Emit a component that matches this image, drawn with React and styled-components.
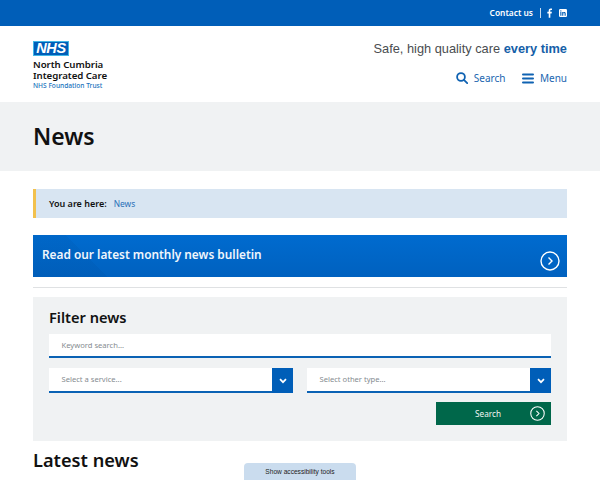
import React from "react";
import styled, { createGlobalStyle } from "styled-components";

const Global = createGlobalStyle`
  html, body { margin: 0; padding: 0; background: #fff; height: 480px; overflow: hidden; }
  body { font-family: "Noto Sans", "Open Sans", sans-serif; color: #111; }
  * { box-sizing: border-box; }
`;
const Page = styled.div`width: 600px; height: 480px; overflow: hidden; position: relative;`;
const TopBar = styled.div`
  height: 26px; background: #005eb8; display: flex; align-items: center; justify-content: flex-end;
  padding-right: 33px; color: #fff;
`;
const TopLink = styled.span`font-size: 8.4px; font-weight: 600; line-height: 1;`;
const Divider = styled.span`width: 1px; height: 10px; background: #c8dcf0; margin: 0 6px 0 7px;`;
const Social = styled.svg`width: 6px; height: 10px; display: block; margin-right: 6px;`;
const Linked = styled.svg`width: 8px; height: 8px; display: block;`;
const Header = styled.header`
  height: 76px; display: flex; justify-content: space-between; padding: 15px 33px 0;
`;
const Logo = styled.div`display: flex; flex-direction: column; align-items: flex-start;`;
const NhsBox = styled.div`
  width: 36px; height: 15px; background: #005eb8; border: 1px solid #41b6e6; color: #fff;
  font: italic 700 14.5px/13px "Liberation Sans", sans-serif; text-align: center; letter-spacing: -0.3px;
  margin-bottom: 3px;
`;
const LogoName = styled.div`font-size: 9.7px; line-height: 10.5px; font-weight: 600; color: #111; white-space: nowrap; margin-top: 1px; letter-spacing: -0.05px;`;
const LogoTrust = styled.div`font-size: 6.6px; line-height: 9px; font-weight: 500; color: #1a73bd; white-space: nowrap;`;
const HeaderRight = styled.div`display: flex; flex-direction: column; align-items: flex-end;`;
const Strap = styled.div`
  font: 400 12.8px/16px "Liberation Sans", sans-serif; color: #4a4d50; white-space: nowrap;
`;
const StrapBold = styled.span`font-weight: 700; color: #1560a8;`;
const Nav = styled.nav`display: flex; align-items: center; gap: 17px; margin-top: 11px; height: 20px;`;
const NavItem = styled.div`display: flex; align-items: center; gap: 5.5px; font-size: 10px; color: #1a66b0;`;
const Band = styled.div`height: 69px; background: #f0f2f3; display: flex; align-items: center; padding: 0 33px;`;
const Title = styled.h1`margin: 0; font-size: 23px; font-weight: 600; line-height: 1; color: #111;`;
const Main = styled.main`padding: 18px 33px 0; display: flex; flex-direction: column;`;
const Crumb = styled.div`
  height: 29px; background: #d8e5f2; border-left: 3px solid #f2c14e; display: flex; align-items: center;
  padding-left: 13px; gap: 7px;
`;
const CrumbLabel = styled.span`font-size: 9px; font-weight: 600; color: #111;`;
const CrumbLink = styled.span`font-size: 8.4px; color: #2a6fb8;`;
const Banner = styled.div`
  height: 42px; margin-top: 17px; position: relative; display: flex; padding: 11px 9px 0;
  background:
    linear-gradient(45deg, rgba(0, 40, 90, 0.06) 0 13%, transparent 13%),
    linear-gradient(180deg, #006bcf 0%, #0061bf 100%);
  overflow: hidden;
  font-size: 11.85px; line-height: 16px; font-weight: 600; color: #f0f6fc;
`;
const BannerCircle = styled.svg`position: absolute; right: 7px; bottom: 6px; width: 20px; height: 20px;`;
const Rule = styled.hr`margin: 10px 0 9px; border: 0; height: 1px; background: #dfe1e3;`;
const Filter = styled.section`
  height: 144px; background: #f0f2f3; padding: 11px 16px 0; display: flex; flex-direction: column;
`;
const FilterTitle = styled.h2`margin: 0; font-size: 14.6px; line-height: 19px; font-weight: 600; color: #111;`;
const Input = styled.div`
  height: 24px; margin-top: 7px; background: #fff; border-bottom: 2px solid #0a62b4; padding-left: 12.5px;
  display: flex; align-items: center; font-size: 7.6px; color: #858b90;
`;
const SelectRow = styled.div`display: grid; grid-template-columns: 244px 244px; justify-content: space-between; margin-top: 10px;`;
const Select = styled.div`
  height: 25px; background: #fff; border-bottom: 2px solid #0a62b4; padding: 0 0 1px 12.5px; position: relative;
  display: flex; align-items: center; font-size: 7.6px; color: #858b90;
`;
const Caret = styled.div`
  position: absolute; right: 0; top: 0; bottom: -2px; width: 21px; background: #005eb8;
  display: flex; align-items: center; justify-content: center;
`;
const ButtonRow = styled.div`display: flex; justify-content: flex-end; margin-top: 9px;`;
const SearchButton = styled.div`
  width: 115px; height: 23px; background: #00674a; color: #f0f6f3; position: relative;
  display: flex; align-items: center; justify-content: center; font-size: 8.2px; padding-right: 11px;
`;
const ButtonCircle = styled.svg`position: absolute; right: 6px; top: 4px; width: 15px; height: 15px;`;
const Latest = styled.h2`margin: 8px 0 0; font-size: 18.2px; line-height: 22px; font-weight: 600; color: #111;`;
const A11yTab = styled.div`
  position: fixed; left: 244px; bottom: 0; width: 112px; height: 17px; padding-top: 1px; background: #cadcee;
  border-radius: 4px 4px 0 0; display: flex; align-items: center; justify-content: center;
  font: 400 6.6px/1 "Liberation Sans", sans-serif; color: #222;
`;

const Circle = ({ as: C }) => (
  <C viewBox="0 0 20 20" fill="none" stroke="#fff">
    <circle cx="10" cy="10" r="9" strokeWidth="1.4" />
    <path d="M8.5 6.5 12 10l-3.5 3.5" strokeWidth="1.4" />
  </C>
);
const Chevron = () => (
  <svg width="8" height="6" viewBox="0 0 8 6" fill="none" stroke="#fff" strokeWidth="1.7">
    <path d="M1 1.2 4 4.2l3-3" />
  </svg>
);

export default function App() {
  return (
    <Page>
      <Global />
      <TopBar>
        <TopLink>Contact us</TopLink>
        <Divider />
        <Social viewBox="0 0 7 11" fill="#fff">
          <path d="M2 11V6H.4V4H2V2.6C2 1 3 .2 4.3.2c.7 0 1.2 0 1.5.1v1.8h-1c-.8 0-1 .4-1 1V4h1.9l-.3 2H3.9v5z" />
        </Social>
        <Linked viewBox="0 0 8 8">
          <rect width="8" height="8" rx="1.2" fill="#fff" />
          <path d="M1.3 3.1h1.1v3.6H1.3zM1.85 1.3a.6.6 0 1 1 0 1.3.6.6 0 0 1 0-1.3zM3.2 3.1h1v.5c.2-.3.6-.6 1.1-.6 1 0 1.4.6 1.4 1.6v2.1H5.6V4.8c0-.5-.1-.9-.6-.9s-.7.4-.7.9v1.9H3.2z" fill="#005eb8" />
        </Linked>
      </TopBar>
      <Header>
        <Logo>
          <NhsBox>NHS</NhsBox>
          <LogoName>North Cumbria<br />Integrated Care</LogoName>
          <LogoTrust>NHS Foundation Trust</LogoTrust>
        </Logo>
        <HeaderRight>
          <Strap>Safe, high quality care <StrapBold>every time</StrapBold></Strap>
          <Nav>
            <NavItem>
              <svg width="12" height="12" viewBox="0 0 12 12" fill="none" stroke="#0f62b2" strokeWidth="1.8">
                <circle cx="5" cy="5" r="3.9" />
                <path d="M7.9 7.9 11.2 11.2" strokeLinecap="round" />
              </svg>
              Search
            </NavItem>
            <NavItem>
              <svg width="12" height="11" viewBox="0 0 12 11" stroke="#0f62b2" strokeWidth="2" strokeLinecap="round">
                <path d="M1 1.5h10M1 5.5h10M1 9.5h10" />
              </svg>
              Menu
            </NavItem>
          </Nav>
        </HeaderRight>
      </Header>
      <Band><Title>News</Title></Band>
      <Main>
        <Crumb>
          <CrumbLabel>You are here:</CrumbLabel>
          <CrumbLink>News</CrumbLink>
        </Crumb>
        <Banner>
          Read our latest monthly news bulletin
          <Circle as={BannerCircle} />
        </Banner>
        <Rule />
        <Filter>
          <FilterTitle>Filter news</FilterTitle>
          <Input>Keyword search...</Input>
          <SelectRow>
            <Select>Select a service...<Caret><Chevron /></Caret></Select>
            <Select>Select other type...<Caret><Chevron /></Caret></Select>
          </SelectRow>
          <ButtonRow>
            <SearchButton>Search<Circle as={ButtonCircle} /></SearchButton>
          </ButtonRow>
        </Filter>
        <Latest>Latest news</Latest>
      </Main>
      <A11yTab>Show accessibility tools</A11yTab>
    </Page>
  );
}
